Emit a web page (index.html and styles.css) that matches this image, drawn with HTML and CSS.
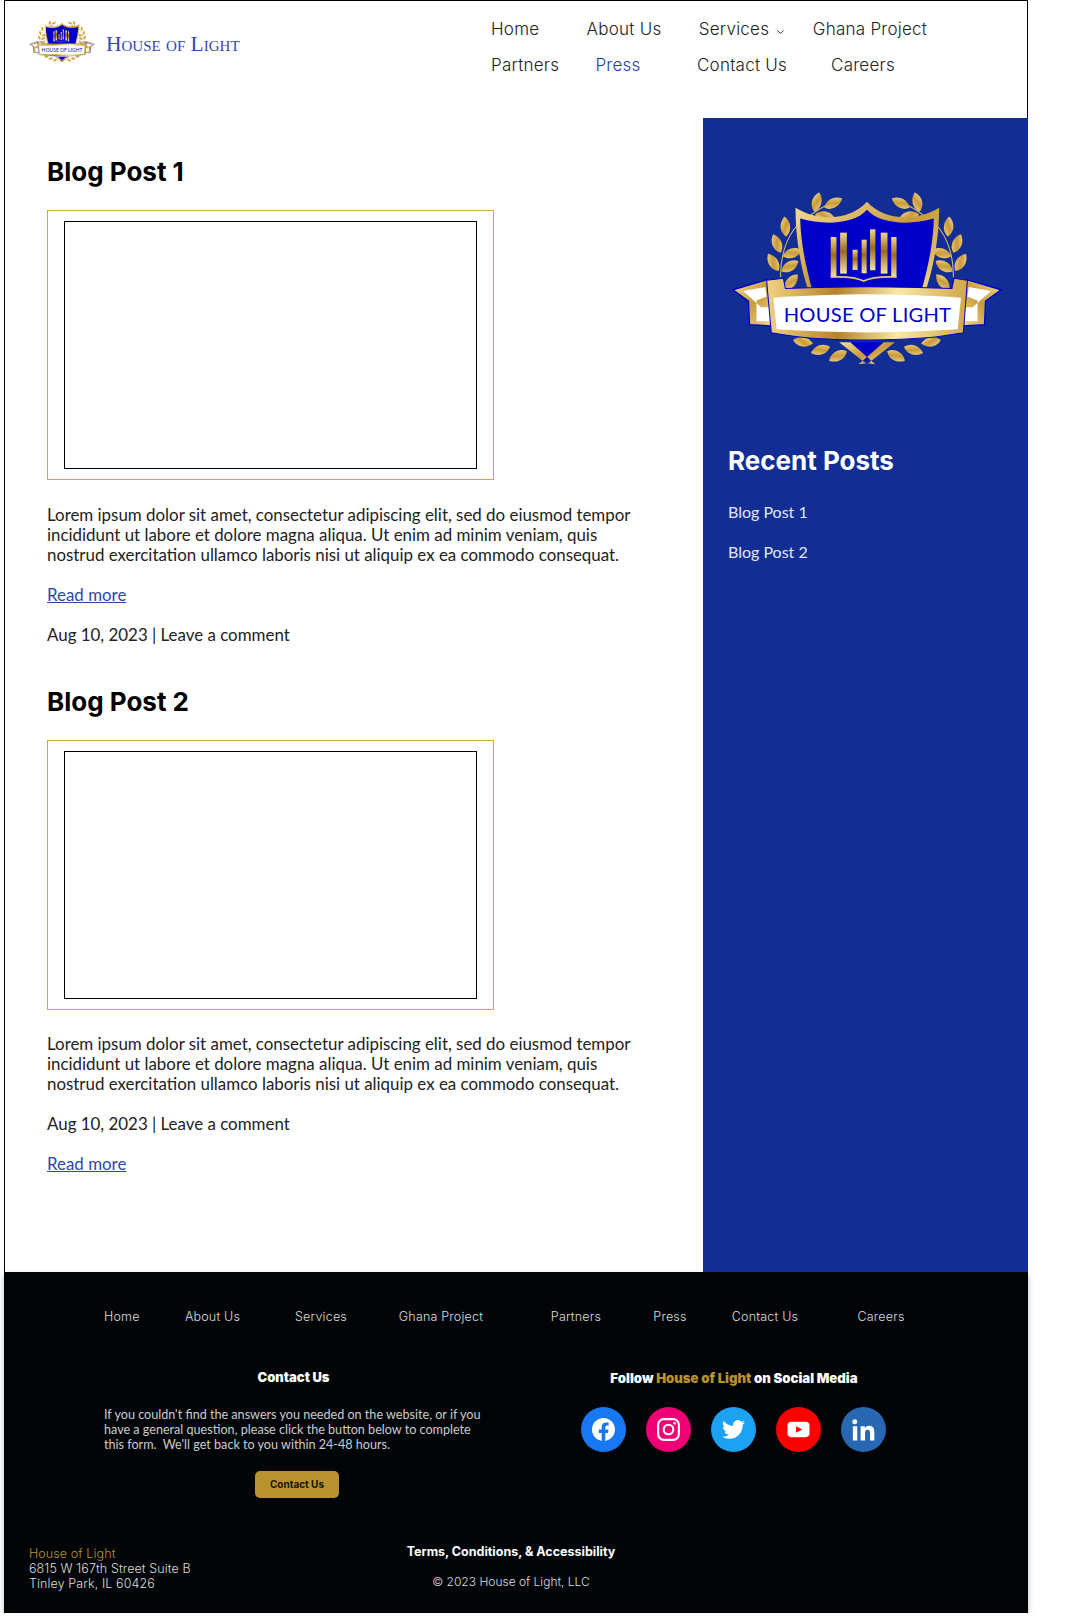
FILE: index.html
```html
<!DOCTYPE html>
<html lang="en">

<head>
  <meta charset="UTF-8">
  <meta name="viewport" content="width=device-width, initial-scale=1.0">
  <title>House of Light | Press</title>
  <link rel="stylesheet" href="styles.css">
</head>

<body>
  <!-- crest shared by header and sidebar -->
  <svg class="defs" width="0" height="0" aria-hidden="true">
    <defs>
      <linearGradient id="gold" x1="0" y1="0" x2="1" y2="1">
        <stop offset="0" stop-color="#f6e09a" />
        <stop offset="0.5" stop-color="#c99b3c" />
        <stop offset="1" stop-color="#f3d88a" />
      </linearGradient>
      <linearGradient id="goldBar" x1="0" y1="0" x2="0" y2="1">
        <stop offset="0" stop-color="#f0d68c" />
        <stop offset="0.45" stop-color="#9c6a1e" />
        <stop offset="1" stop-color="#f6e3a4" />
      </linearGradient>
      <linearGradient id="goldBand" x1="0" y1="0" x2="1" y2="0">
        <stop offset="0" stop-color="#f0d284" />
        <stop offset="0.35" stop-color="#b5822a" />
        <stop offset="0.65" stop-color="#f9e9a8" />
        <stop offset="1" stop-color="#d2a64a" />
      </linearGradient>
      <path id="leaf" d="M0 0C-20 -16 -18 -44 0 -60C18 -44 20 -16 0 0Z" fill="url(#gold)" />
      <g id="laurel">
        <path d="M218 325C216 265 235 205 268 170M300 145C320 130 340 115 365 105" fill="none" stroke="#e5c271" stroke-width="3" />
        <use href="#leaf" transform="translate(318 130) rotate(14)" />
        <use href="#leaf" transform="translate(348 118) rotate(62)" />
        <use href="#leaf" transform="translate(320 138) rotate(100)" />
        <use href="#leaf" transform="translate(234 204) rotate(-4)" />
        <use href="#leaf" transform="translate(218 252) rotate(-22)" />
        <use href="#leaf" transform="translate(212 306) rotate(-32)" />
        <use href="#leaf" transform="translate(224 262) rotate(72)" />
        <use href="#leaf" transform="translate(220 308) rotate(58)" />
        <use href="#leaf" transform="translate(230 362) rotate(40)" />
        <use href="#leaf" transform="translate(365 532) rotate(-108)" />
        <use href="#leaf" transform="translate(415 545) rotate(-118)" />
        <use href="#leaf" transform="translate(255 512) rotate(100)" />
      </g>
      <path id="tail" d="M76 362L178 332L192 470L125 466L122 396Z" fill="url(#gold)" stroke="#0000c8" stroke-width="4" />
      <symbol id="crest" viewBox="70 65 810 530">
        <use href="#laurel" />
        <use href="#laurel" transform="translate(950 0) scale(-1 1)" />
        <path d="M475 575L392 518H558Z" fill="#0000c8" />
        <path d="M392 518L425 518L500 584L470 580ZM558 518L525 518L450 584L480 580Z" fill="url(#gold)" />
        <path d="M262 118C340 165 430 150 475 100C520 150 610 165 690 118C690 210 672 300 648 370H302C278 300 262 210 262 118Z" fill="url(#gold)" />
        <path d="M276 150C350 172 440 165 475 124C510 165 600 172 674 150C672 230 655 300 636 370H314C295 300 278 230 276 150Z" fill="#0000c8" />
        <g fill="url(#goldBar)">
          <rect x="367" y="205" width="17" height="120" />
          <rect x="395" y="192" width="20" height="122" />
          <rect x="432" y="243" width="15" height="60" />
          <rect x="459" y="213" width="15" height="100" />
          <rect x="484" y="182" width="16" height="122" />
          <rect x="516" y="192" width="20" height="122" />
          <rect x="547" y="205" width="16" height="120" />
        </g>
        <path d="M367 324C410 322 445 326 465 336C485 326 520 322 563 324" fill="none" stroke="#e7c878" stroke-width="5" />
        <use href="#tail" />
        <use href="#tail" transform="translate(950 0) scale(-1 1)" />
        <path d="M106 366L172 354L176 382L146 394V456H186V414H160ZM844 366L778 354L774 382L804 394V456H764V414H790Z" fill="#fff" />
        <path d="M176 334L226 328L232 358C390 352 560 352 728 358L734 328L774 334L762 490C700 500 660 510 480 512C300 510 250 500 190 490Z" fill="url(#goldBand)" stroke="#0000c8" stroke-width="3" />
        <path d="M196 386C380 372 570 372 755 386L745 480C570 492 380 492 206 480Z" fill="#fff" />
        <text class="crest-text" x="476" y="459" text-anchor="middle" textLength="498" lengthAdjust="spacing">HOUSE OF LIGHT</text>
      </symbol>
    </defs>
  </svg>

  <div class="page">
    <header class="site-header">
      <a class="brand" href="#">
        <svg class="brand-logo"><use href="#crest" /></svg>
        <span class="brand-name">House of Light</span>
      </a>
      <nav class="main-nav">
        <a href="#">Home</a>
        <a class="nudge-right" href="#">About Us</a>
        <a href="#">Services <svg class="chevron" viewBox="0 0 10 6"><path d="M1.5 1.5L5 4.5L8.5 1.5" fill="none" stroke="#222" stroke-width="1" /></svg></a>
        <a href="#">Ghana Project</a>
        <a href="#">Partners</a>
        <a class="active nudge-left" href="#">Press</a>
        <a href="#">Contact Us</a>
        <a class="careers" href="#">Careers</a>
      </nav>
    </header>

    <main class="content">
      <section class="posts">
        <article class="post">
          <h2>Blog Post 1</h2>
          <div class="media"><div class="media-inner"></div></div>
          <p>Lorem ipsum dolor sit amet, consectetur adipiscing elit, sed do eiusmod tempor incididunt ut labore et dolore magna aliqua. Ut enim ad minim veniam, quis nostrud exercitation ullamco laboris nisi ut aliquip ex ea commodo consequat.</p>
          <p><a href="#">Read more</a></p>
          <p>Aug 10, 2023 | Leave a comment</p>
        </article>
        <article class="post">
          <h2>Blog Post 2</h2>
          <div class="media"><div class="media-inner"></div></div>
          <p>Lorem ipsum dolor sit amet, consectetur adipiscing elit, sed do eiusmod tempor incididunt ut labore et dolore magna aliqua. Ut enim ad minim veniam, quis nostrud exercitation ullamco laboris nisi ut aliquip ex ea commodo consequat.</p>
          <p>Aug 10, 2023 | Leave a comment</p>
          <p><a href="#">Read more</a></p>
        </article>
      </section>

      <aside class="sidebar">
        <svg class="sidebar-logo"><use href="#crest" /></svg>
        <h2>Recent Posts</h2>
        <a href="#">Blog Post 1</a>
        <a href="#">Blog Post 2</a>
      </aside>
    </main>

    <footer class="site-footer">
      <nav class="footer-nav">
        <a href="#">Home</a>
        <a href="#">About Us</a>
        <a href="#">Services</a>
        <a href="#">Ghana Project</a>
        <a href="#">Partners</a>
        <a href="#">Press</a>
        <a href="#">Contact Us</a>
        <a href="#">Careers</a>
      </nav>

      <div class="footer-mid">
        <div class="footer-contact">
          <h4>Contact Us</h4>
          <p>If you couldn't find the answers you needed on the website, or if you have a general question, please click the button below to complete this form.&nbsp; We'll get back to you within 24-48 hours.</p>
          <a class="button" href="#">Contact Us</a>
        </div>
        <div class="footer-social">
          <h4>Follow <span>House of Light</span> on Social Media</h4>
          <div class="social-icons">
            <a class="facebook" href="#"><svg viewBox="0 0 24 24"><path fill="#fff" d="M24 12.073c0-6.627-5.373-12-12-12s-12 5.373-12 12c0 5.99 4.388 10.954 10.125 11.854v-8.385H7.078v-3.47h3.047V9.43c0-3.007 1.792-4.669 4.533-4.669 1.312 0 2.686.235 2.686.235v2.953H15.83c-1.491 0-1.956.925-1.956 1.874v2.25h3.328l-.532 3.47h-2.796v8.385C19.612 23.027 24 18.062 24 12.073z" /></svg></a>
            <a class="instagram" href="#"><svg viewBox="0 0 24 24"><rect x="1.2" y="1.2" width="21.6" height="21.6" rx="6" fill="none" stroke="#fff" stroke-width="2.2" /><circle cx="12" cy="12" r="5" fill="none" stroke="#fff" stroke-width="2.2" /><circle cx="18.4" cy="5.6" r="1.4" fill="#fff" /></svg></a>
            <a class="twitter" href="#"><svg viewBox="0 0 24 24"><path fill="#fff" d="M23.953 4.57a10 10 0 01-2.825.775 4.958 4.958 0 002.163-2.723c-.951.555-2.005.959-3.127 1.184a4.92 4.92 0 00-8.384 4.482C7.69 8.095 4.067 6.13 1.64 3.162a4.822 4.822 0 00-.666 2.475c0 1.71.87 3.213 2.188 4.096a4.904 4.904 0 01-2.228-.616v.06a4.923 4.923 0 003.946 4.827 4.996 4.996 0 01-2.212.085 4.936 4.936 0 004.604 3.417 9.867 9.867 0 01-6.102 2.105c-.39 0-.779-.023-1.17-.067a13.995 13.995 0 007.557 2.209c9.053 0 13.998-7.496 13.998-13.985 0-.21 0-.42-.015-.63A9.935 9.935 0 0024 4.59z" /></svg></a>
            <a class="youtube" href="#"><svg viewBox="0 0 24 24"><rect x="0.5" y="4" width="23" height="16" rx="4" fill="#fff" /><path d="M9.5 8.5L16 12L9.5 15.5Z" fill="#f00" /></svg></a>
            <a class="linkedin" href="#"><svg viewBox="0 0 24 24"><path fill="#fff" d="M23.4 23.4h-4.6v-7.2c0-1.7-.04-3.9-2.4-3.9-2.4 0-2.8 1.9-2.8 3.8v7.3H9V8.6h4.4v2h.06c.6-1.2 2.1-2.4 4.35-2.4 4.65 0 5.5 3.06 5.5 7.04v8.16zM3.2 6.6A2.66 2.66 0 113.2 1.3a2.66 2.66 0 010 5.3zM5.5 23.4H.9V8.6h4.6v14.8z" /></svg></a>
          </div>
        </div>
      </div>

      <div class="footer-bottom">
        <address>
          <span>House of Light</span>
          6815 W 167th Street Suite B<br>
          Tinley Park, IL 60426
        </address>
        <div class="legal">
          <a href="#">Terms, Conditions, &amp; Accessibility</a>
          <p>© 2023 House of Light, LLC</p>
        </div>
      </div>
    </footer>
  </div>
</body>

</html>
```

FILE: styles.css
```css
body {
  font-family: "Lato", "Liberation Sans", sans-serif;
  background-color: #fff;
  color: #222;
  margin: 0;
  padding: 0;
}

a {
  color: inherit;
  text-decoration: none;
}

.defs {
  position: absolute;
}

.crest-text {
  font-family: "Lato", sans-serif;
  font-size: 60px;
  font-weight: 400;
  fill: #0000c8;
}

.page {
  width: 1023px;
  margin-left: 4px;
  border-left: 1px solid #000;
  border-top: 1px solid #000;
}

/* header */
.site-header {
  display: flex;
  justify-content: space-between;
  height: 117px;
  border-right: 1px solid #000;
  padding: 0 90px 0 24px;
}

.brand {
  display: flex;
  align-items: center;
  align-self: flex-start;
  gap: 11px;
  margin-top: 19px;
}

.brand-logo {
  width: 66px;
  height: 43px;
}

.brand-name {
  margin-top: 6px;
  font-family: "Liberation Serif", serif;
  font-variant: small-caps;
  font-size: 21.5px;
  color: #2f4bb0;
}

.main-nav {
  display: grid;
  grid-template-columns: 70px 120px 122px 134px;
  grid-auto-rows: 36px;
  align-items: center;
  align-content: start;
  padding-top: 10px;
  font-family: "Inter", sans-serif;
  font-size: 17px;
  font-weight: 300;
  letter-spacing: 0.25px;
  text-align: center;
  white-space: nowrap;
}

.main-nav a:nth-child(4n + 1) {
  text-align: left;
}

.main-nav .active {
  color: #1f3da3;
}

.main-nav .nudge-right {
  padding-left: 6px;
}

.main-nav .nudge-left {
  padding-right: 6px;
}

.main-nav .careers {
  padding-right: 14px;
}

.chevron {
  width: 9px;
  height: 6px;
  margin-left: 2px;
}

/* posts + sidebar */
.content {
  display: flex;
  min-height: 1154px;
}

.posts {
  flex: 1;
  padding: 39px 0 0 42px;
}

.post {
  width: 600px;
  margin-bottom: 42px;
}

.post h2 {
  font-family: "Inter", sans-serif;
  font-size: 26px;
  font-weight: 700;
  line-height: 30px;
  color: #000;
  margin: 0 0 23px;
}

.media {
  box-sizing: border-box;
  width: 447px;
  height: 270px;
  padding: 10px 16px;
  border: 1px solid #d4a843;
  margin-bottom: 25px;
}

.post + .post .media {
  margin-bottom: 24px;
}

.media-inner {
  box-sizing: border-box;
  height: 248px;
  width: 413px;
  border: 1px solid #000;
}

.post p {
  font-size: 16.9px;
  line-height: 20px;
  margin: 0 0 20px;
}

.post p:last-child {
  margin-bottom: 0;
}

.post p a {
  color: #2d48a8;
  text-decoration: underline;
}

.sidebar {
  display: flex;
  flex-direction: column;
  align-items: flex-start;
  width: 325px;
  background-color: #122e94;
  color: #e3e6f2;
  padding-left: 25px;
  box-sizing: border-box;
  font-size: 16px;
}

.sidebar-logo {
  width: 272px;
  height: 178px;
  margin: 72px 0 0 3px;
}

.sidebar h2 {
  font-family: "Inter", sans-serif;
  font-size: 26px;
  font-weight: 700;
  line-height: 30px;
  color: #fff;
  margin: 78px 0 26px;
}

.sidebar a {
  line-height: 20px;
  margin-bottom: 20px;
}

/* footer */
.site-footer {
  height: 341px;
  box-sizing: border-box;
  margin-left: -1px;
  width: 1024px;
  background-color: #020507;
  color: #ddd;
  padding: 37px 0 0 25px;
  box-shadow: 0 3px 6px rgba(0, 0, 0, 0.25);
}

.footer-nav {
  display: grid;
  grid-template-columns: 63px 91px 126px 114px 156px 32px 158px 74px;
  margin-left: 75px;
  font-family: "Inter", sans-serif;
  font-size: 12.5px;
  font-weight: 300;
  letter-spacing: 0.2px;
  line-height: 16px;
  text-align: center;
  white-space: nowrap;
}

.footer-nav a {
  display: block;
  justify-self: center;
}

.footer-nav a:first-child {
  justify-self: start;
}

.footer-mid {
  display: flex;
  margin-top: 44px;
  height: 140px;
}

.footer-mid h4 {
  font-family: "Inter", sans-serif;
  font-size: 13px;
  font-weight: 900;
  line-height: 16px;
  color: #fff;
  margin: 0;
  text-align: center;
}

.footer-contact {
  width: 379px;
  margin-left: 75px;
}

.footer-contact p {
  font-size: 12.6px;
  line-height: 15px;
  color: #ccc;
  margin: 22px 0 19px;
}

.button {
  display: block;
  width: 84px;
  height: 27px;
  margin-left: 151px;
  border-radius: 5px;
  background-color: #b8922e;
  color: #1a1405;
  font-family: "Inter", sans-serif;
  font-size: 10px;
  font-weight: 700;
  line-height: 27px;
  text-align: center;
}

.footer-social {
  width: 340px;
  margin-left: 81px;
}

.footer-social h4 {
  margin-top: 1px;
  font-size: 13.2px;
}

.footer-social h4 span {
  color: #b8922e;
}

.social-icons {
  display: flex;
  gap: 20px;
  margin: 21px 0 0 17px;
}

.social-icons a {
  display: flex;
  align-items: center;
  justify-content: center;
  width: 45px;
  height: 45px;
  border-radius: 50%;
}

.social-icons svg {
  width: 23px;
  height: 23px;
}

.facebook {
  background-color: #1877f2;
}

.instagram {
  background-color: #f00075;
}

.twitter {
  background-color: #1da1f2;
}

.youtube {
  background-color: #f00;
}

.linkedin {
  background-color: #2867b2;
}

.footer-bottom {
  display: flex;
  margin-top: 35px;
}

address {
  width: 330px;
  padding-top: 2px;
  font-family: "Inter", sans-serif;
  font-size: 12.5px;
  font-style: normal;
  font-weight: 300;
  letter-spacing: 0.1px;
  line-height: 15px;
}

address span {
  display: block;
  color: #b8922e;
}

.legal {
  width: 304px;
  text-align: center;
  font-family: "Inter", sans-serif;
  font-size: 12.5px;
}

.legal a {
  display: block;
  color: #fff;
  font-weight: 700;
  line-height: 15px;
}

.legal p {
  font-size: 12px;
  font-weight: 300;
  line-height: 15px;
  margin: 15px 0 0;
}
```
